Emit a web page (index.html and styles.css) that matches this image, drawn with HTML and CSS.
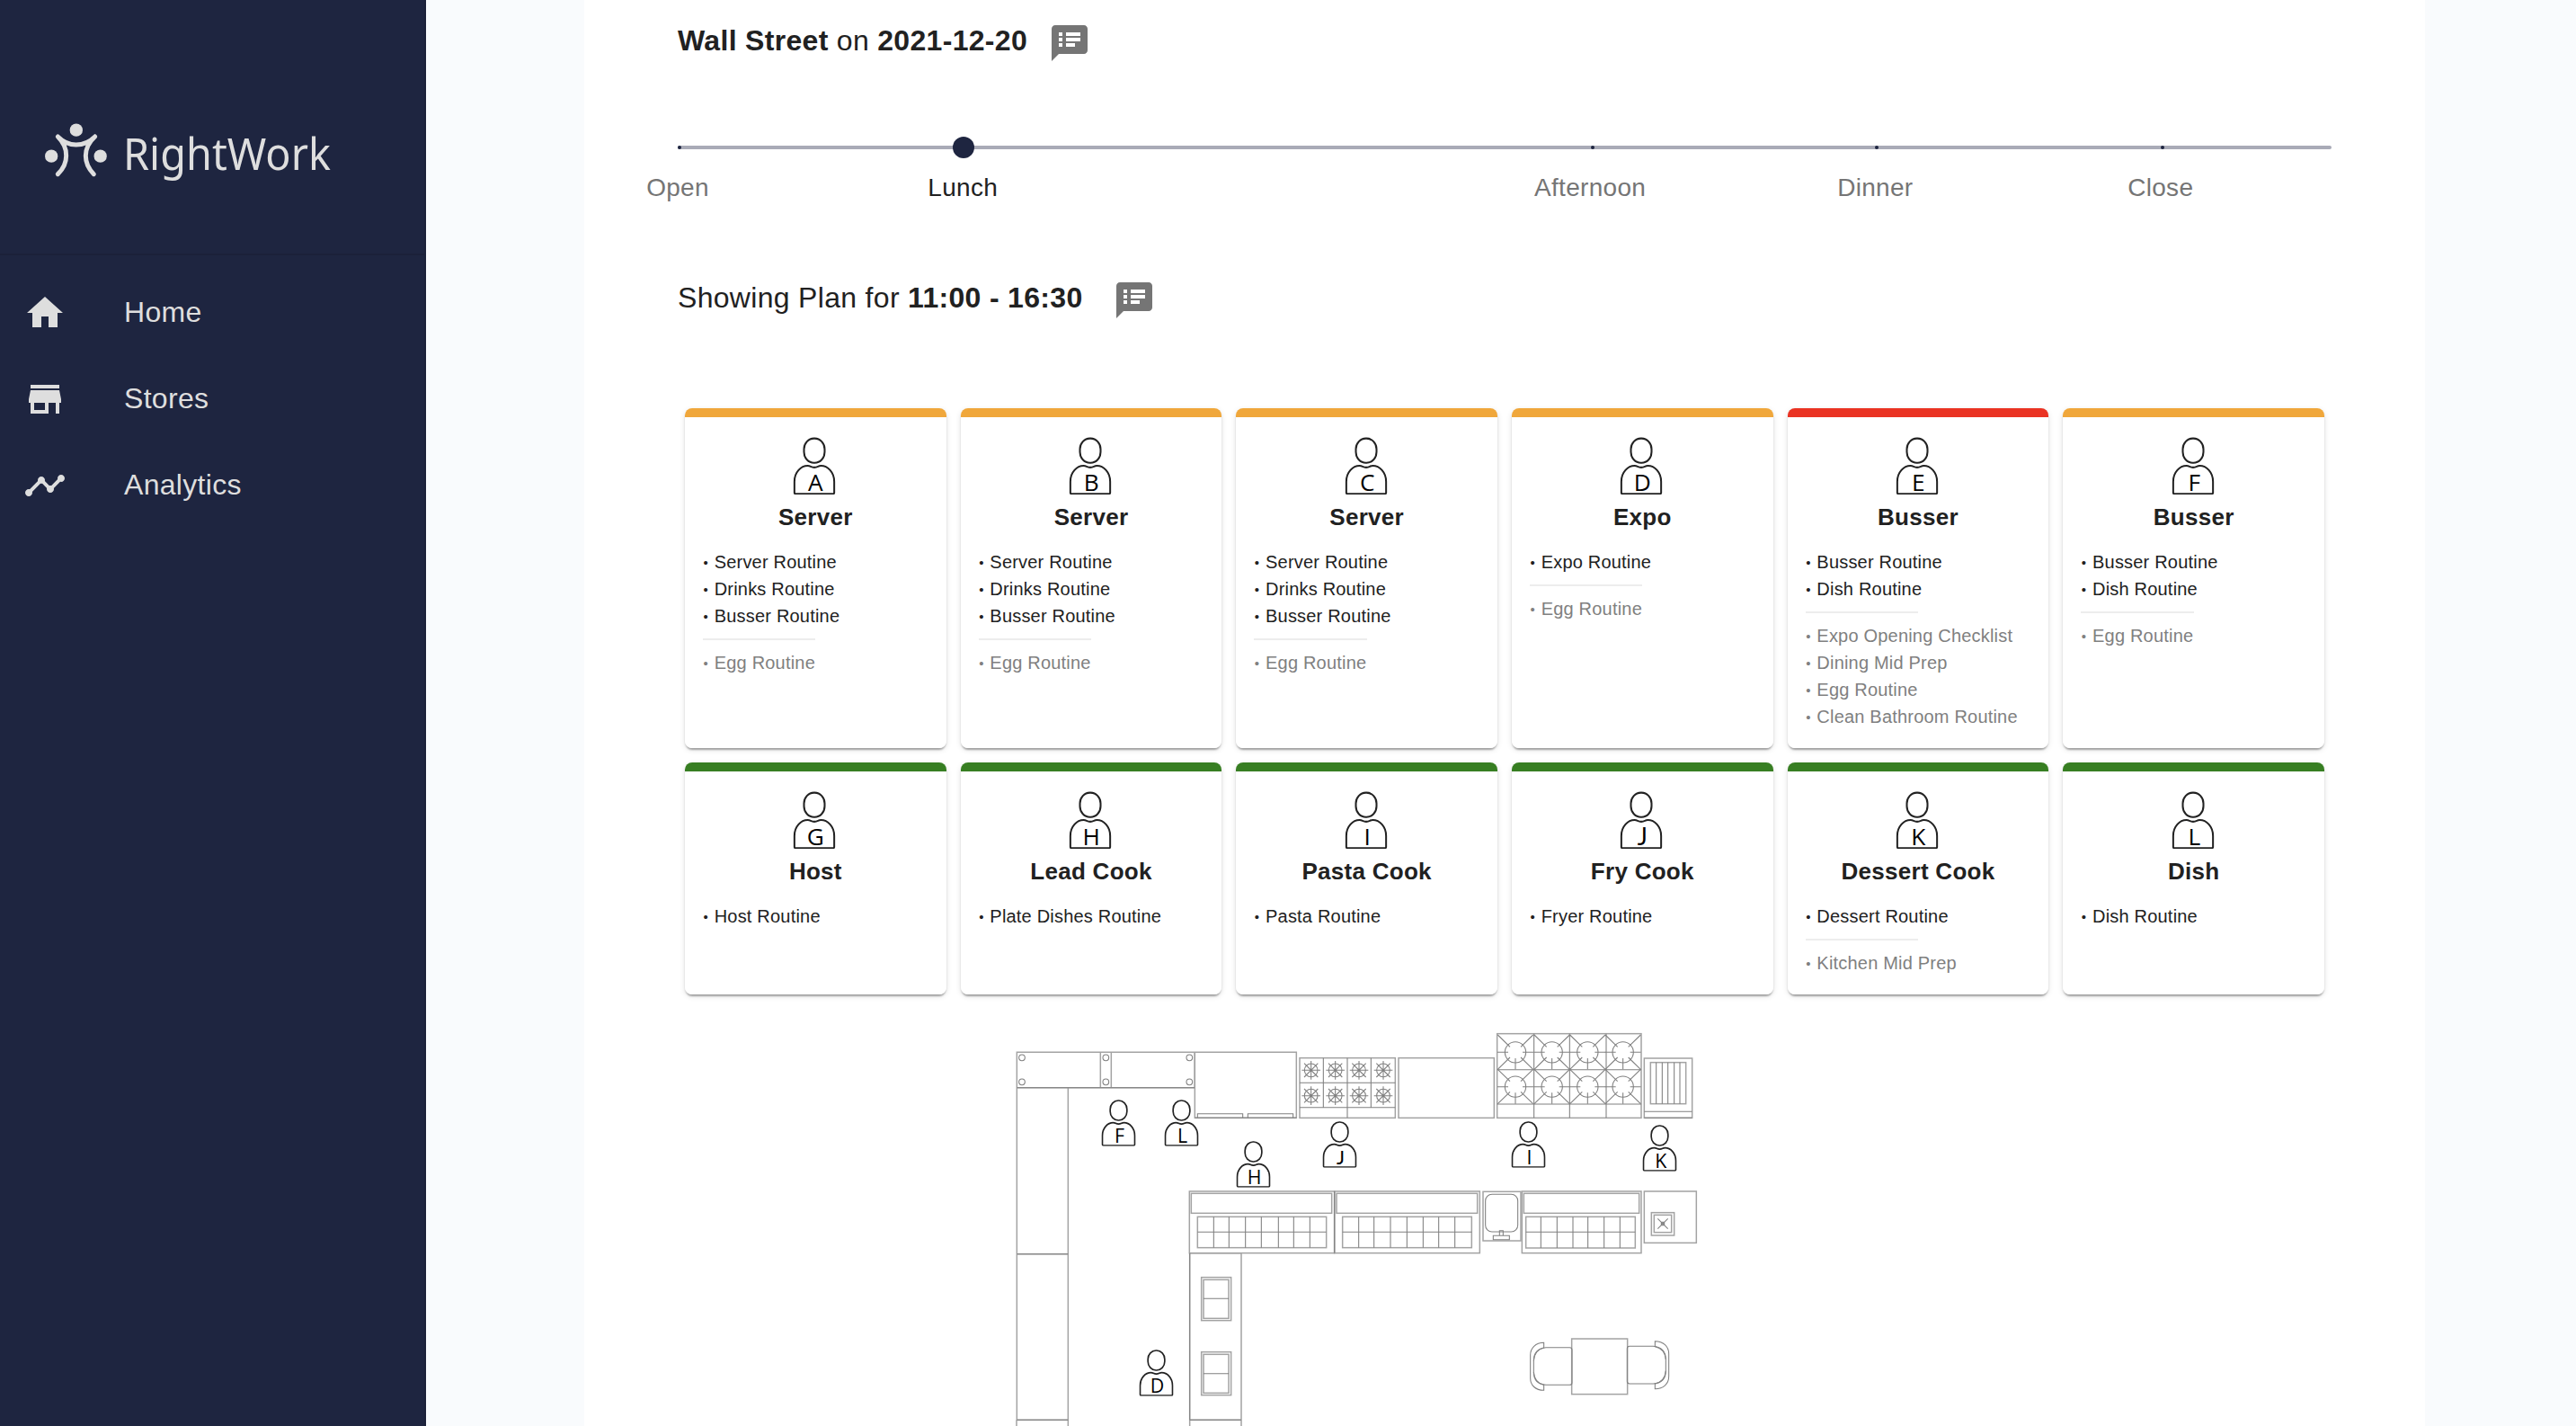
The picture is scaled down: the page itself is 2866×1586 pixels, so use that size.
FILE: index.html
```html
<!DOCTYPE html>
<html lang="en">
<head>
<meta charset="utf-8">
<title>RightWork</title>
<link rel="stylesheet" href="styles.css">
</head>
<body>
<svg class="defs" aria-hidden="true">
  <symbol id="person" viewBox="-58 -3 116 156">
    <rect x="-28" y="1" width="56" height="66" rx="27" ry="29"/>
    <path d="M-54 148V118C-54 92-36 75-18 75Q-14 75-10 77Q0 82 10 77Q14 75 18 75C36 75 54 92 54 118V148Q54 151 51 151H-51Q-54 151-54 148Z"/>
  </symbol>
  <symbol id="notes" viewBox="0 0 24 24"><path d="M20 2H4c-1.1 0-1.99.9-1.99 2L2 22l4-4h14c1.1 0 2-.9 2-2V4c0-1.1-.9-2-2-2zM8 14H6v-2h2v2zm0-3H6V9h2v2zm0-3H6V6h2v2zm7 6h-5v-2h5v2zm3-3h-8V9h8v2zm0-3h-8V6h8v2z"/></symbol>
  <g id="burner"><circle r="22"/><path d="M-31 0H31M0-31V31M-23-23L23 23M23-23L-23 23"/></g>
  <g id="ring"><circle r="35"/><path d="M-59-58L-18-18M59-58L18-18M-59 57L-18 17M59 57L18 17M-60 0H-24M24 0H60M0 20V57"/></g>
</svg>
<div class="app">
  <aside class="sidebar">
    <div class="brand">
      <svg class="logo" width="400" height="80" viewBox="0 90 1200 240">
        <g class="logo-dots"><circle cx="254.500" cy="134" r="21.500"/><circle cx="171.500" cy="221" r="21.500"/><circle cx="335" cy="221" r="21.500"/></g>
        <path class="logo-lines" d="M193 156C212 175 222 195 221 220C221 243 211 264 193 281M193 156Q220 183 254 183Q290 183 317 156M317 156C296 175 286 195 286 220C286 243 296 264 313 281"/>
        <text class="logo-text" x="411" y="267" textLength="693" lengthAdjust="spacingAndGlyphs">RightWork</text>
      </svg>
    </div>
    <nav class="nav">
      <a class="nav-item"><svg viewBox="0 0 24 24"><path d="M10 20v-6h4v6h5v-8h3L12 3 2 12h3v8z"/></svg><span>Home</span></a>
      <a class="nav-item"><svg viewBox="0 0 24 24"><path d="M20 4H4v2h16V4zm1 10v-2l-1-5H4l-1 5v2h1v6h10v-6h4v6h2v-6h1zm-9 4H6v-4h6v4z"/></svg><span>Stores</span></a>
      <a class="nav-item"><svg viewBox="0 0 24 24"><path d="M23 8c0 1.100-.9 2-2 2-.18 0-.35-.02-.51-.07l-3.560 3.550c.05.16.07.34.07.52 0 1.100-.9 2-2 2s-2-.9-2-2c0-.18.02-.36.07-.52l-2.550-2.550c-.16.05-.34.07-.52.07s-.36-.02-.52-.07l-4.550 4.560c.05.16.07.33.07.51 0 1.100-.9 2-2 2s-2-.9-2-2 .9-2 2-2c.18 0 .35.02.51.07l4.560-4.550C8.020 9.360 8 9.180 8 9c0-1.100.9-2 2-2s2 .9 2 2c0 .18-.02.36-.07.52l2.550 2.550c.16-.05.34-.07.52-.07s.36.02.52.07l3.550-3.560C19.020 8.350 19 8.180 19 8c0-1.100.9-2 2-2s2 .9 2 2z"/></svg><span>Analytics</span></a>
    </nav>
  </aside>
  <main class="main">
    <section class="panel">
      <h1 class="heading"><span><b>Wall Street</b> on <b>2021-12-20</b></span><svg class="note"><use href="#notes"/></svg></h1>
      <div class="slider">
        <div class="rail"></div>
        <i class="mark" style="left:0%"></i><i class="mark" style="left:55.220%"></i><i class="mark" style="left:72.390%"></i><i class="mark" style="left:89.670%"></i>
        <i class="thumb" style="left:17.280%"></i>
        <span class="label" style="left:0%">Open</span>
        <span class="label label-active" style="left:17.240%">Lunch</span>
        <span class="label" style="left:55.170%">Afternoon</span>
        <span class="label" style="left:72.410%">Dinner</span>
        <span class="label" style="left:89.660%">Close</span>
      </div>
      <h2 class="heading heading-plan"><span>Showing Plan for <b>11:00 - 16:30</b></span><svg class="note"><use href="#notes"/></svg></h2>

      <div class="cards">
        <article class="card orange"><svg class="avatar" viewBox="-58 -3 116 156"><use href="#person" x="-58" y="-3" width="116" height="156"/><text x="3" y="143">A</text></svg><h3>Server</h3>
          <ul><li>Server Routine</li><li>Drinks Routine</li><li>Busser Routine</li></ul><hr><ul class="extra"><li>Egg Routine</li></ul></article>
        <article class="card orange"><svg class="avatar" viewBox="-58 -3 116 156"><use href="#person" x="-58" y="-3" width="116" height="156"/><text x="3" y="143">B</text></svg><h3>Server</h3>
          <ul><li>Server Routine</li><li>Drinks Routine</li><li>Busser Routine</li></ul><hr><ul class="extra"><li>Egg Routine</li></ul></article>
        <article class="card orange"><svg class="avatar" viewBox="-58 -3 116 156"><use href="#person" x="-58" y="-3" width="116" height="156"/><text x="3" y="143">C</text></svg><h3>Server</h3>
          <ul><li>Server Routine</li><li>Drinks Routine</li><li>Busser Routine</li></ul><hr><ul class="extra"><li>Egg Routine</li></ul></article>
        <article class="card orange"><svg class="avatar" viewBox="-58 -3 116 156"><use href="#person" x="-58" y="-3" width="116" height="156"/><text x="3" y="143">D</text></svg><h3>Expo</h3>
          <ul><li>Expo Routine</li></ul><hr><ul class="extra"><li>Egg Routine</li></ul></article>
        <article class="card red"><svg class="avatar" viewBox="-58 -3 116 156"><use href="#person" x="-58" y="-3" width="116" height="156"/><text x="3" y="143">E</text></svg><h3>Busser</h3>
          <ul><li>Busser Routine</li><li>Dish Routine</li></ul><hr><ul class="extra"><li>Expo Opening Checklist</li><li>Dining Mid Prep</li><li>Egg Routine</li><li>Clean Bathroom Routine</li></ul></article>
        <article class="card orange"><svg class="avatar" viewBox="-58 -3 116 156"><use href="#person" x="-58" y="-3" width="116" height="156"/><text x="3" y="143">F</text></svg><h3>Busser</h3>
          <ul><li>Busser Routine</li><li>Dish Routine</li></ul><hr><ul class="extra"><li>Egg Routine</li></ul></article>
        <article class="card green"><svg class="avatar" viewBox="-58 -3 116 156"><use href="#person" x="-58" y="-3" width="116" height="156"/><text x="3" y="143">G</text></svg><h3>Host</h3>
          <ul><li>Host Routine</li></ul></article>
        <article class="card green"><svg class="avatar" viewBox="-58 -3 116 156"><use href="#person" x="-58" y="-3" width="116" height="156"/><text x="3" y="143">H</text></svg><h3>Lead Cook</h3>
          <ul><li>Plate Dishes Routine</li></ul></article>
        <article class="card green"><svg class="avatar" viewBox="-58 -3 116 156"><use href="#person" x="-58" y="-3" width="116" height="156"/><text x="3" y="143">I</text></svg><h3>Pasta Cook</h3>
          <ul><li>Pasta Routine</li></ul></article>
        <article class="card green"><svg class="avatar" viewBox="-58 -3 116 156"><use href="#person" x="-58" y="-3" width="116" height="156"/><text class="letter-j" x="3" y="143">J</text></svg><h3>Fry Cook</h3>
          <ul><li>Fryer Routine</li></ul></article>
        <article class="card green"><svg class="avatar" viewBox="-58 -3 116 156"><use href="#person" x="-58" y="-3" width="116" height="156"/><text x="3" y="143">K</text></svg><h3>Dessert Cook</h3>
          <ul><li>Dessert Routine</li></ul><hr><ul class="extra"><li>Kitchen Mid Prep</li></ul></article>
        <article class="card green"><svg class="avatar" viewBox="-58 -3 116 156"><use href="#person" x="-58" y="-3" width="116" height="156"/><text x="3" y="143">L</text></svg><h3>Dish</h3>
          <ul><li>Dish Routine</li></ul></article>
      </div>

      <svg class="floor" width="1840" height="460" viewBox="-1068 -42 5520 1380">
        <!-- outer outlines -->
        <g class="outline">
          <path d="M64 91H657V209H64ZM64 209H235V764H64ZM64 764H235V1318H64ZM63 1318V1400M235 1318V1400M658 91H997V310H658Z"/>
          <path d="M343 91V209M379 91V209"/>
          <rect x="1008" y="110" width="319" height="200"/>
          <rect x="640" y="555" width="484" height="206"/>
          <rect x="1124" y="555" width="485" height="206"/>
          <path d="M641 761H813V1318H641ZM641 1318V1400M813 1318V1400"/>
          <rect x="646" y="562" width="469" height="66"/>
          <rect x="1131" y="562" width="470" height="66"/>
          <rect x="667" y="640" width="430" height="103"/>
          <rect x="1151" y="640" width="431" height="103"/>
          <rect x="680" y="842" width="99" height="144"/><rect x="687" y="850" width="84" height="129"/>
          <rect x="680" y="1091" width="99" height="144"/><rect x="687" y="1099" width="84" height="129"/>
          <g transform="translate(1290 0)">
            <rect x="48" y="110" width="319" height="200"/>
            <rect x="377" y="29" width="481" height="281"/>
            <rect x="868" y="111" width="160" height="199"/>
            <rect x="889" y="125" width="118" height="138"/>
            <rect x="330" y="556" width="126" height="164"/>
            <rect x="460" y="555" width="398" height="206"/>
            <rect x="466" y="562" width="385" height="66"/>
            <rect x="473" y="640" width="365" height="104"/>
            <rect x="868" y="555" width="174" height="172"/>
            <rect x="892" y="626" width="76" height="76"/>
            <rect x="901" y="634" width="58" height="58"/>
          </g>
          <rect x="1916" y="1047" width="186" height="185"/>
        </g>
        <!-- inner details -->
        <g class="detail">
          <path d="M64 209H657M64 764H235M64 1318H235M641 761V1318M641 1318H813M1124 555V761"/>
          <circle cx="81" cy="109" r="10"/><circle cx="361" cy="109" r="10"/><circle cx="640" cy="109" r="10"/>
          <circle cx="81" cy="190" r="10"/><circle cx="361" cy="190" r="10"/><circle cx="640" cy="190" r="10"/>
          <path d="M667 310V296H818V310M835 310V296H986V310M658 310H997"/>
          <path d="M1087 110V275M1167 110V310M1246 110V275M1008 193H1327M1008 275H1327"/>
          <use href="#burner" x="1046" y="151"/><use href="#burner" x="1127" y="151"/><use href="#burner" x="1206" y="151"/><use href="#burner" x="1287" y="151"/>
          <use href="#burner" x="1046" y="236"/><use href="#burner" x="1127" y="236"/><use href="#burner" x="1206" y="236"/><use href="#burner" x="1287" y="236"/>
          <path d="M667 691H1097M721 640V743M772 640V743M827 640V743M880 640V743M937 640V743M988 640V743M1042 640V743"/>
          <path d="M1151 691H1582M1205 640V743M1256 640V743M1311 640V743M1366 640V743M1420 640V743M1472 640V743M1526 640V743"/>
          <path d="M687 913H771M687 1163H771"/>
          <g transform="translate(1290 0)">
            <path d="M500 29V310M619 29V310M741 29V310M377 149H858M377 264H858"/>
            <use href="#ring" x="438" y="91"/><use href="#ring" x="560" y="91"/><use href="#ring" x="679" y="91"/><use href="#ring" x="797" y="91"/>
            <use href="#ring" x="438" y="206"/><use href="#ring" x="560" y="206"/><use href="#ring" x="679" y="206"/><use href="#ring" x="797" y="206"/>
            <path d="M868 289H1028M868 310H1028M908 125V263M928 125V263M947 125V263M968 125V263M987 125V263"/>
            <rect x="338" y="565" width="108" height="125" rx="22"/>
            <path d="M385 703V686H397V703M364 703H418V716H364Z"/>
            <path d="M473 691H838M523 640V744M577 640V744M630 640V744M680 640V744M734 640V744M787 640V744"/>
            <path d="M913 646L947 680M947 646L913 680M925 658H935V668H925Z"/>
          </g>
          <g transform="translate(1590 480)">
            <path d="M327 604Q327 596 319 596H240Q199 600 199 640V678Q199 718 240 721H319Q327 721 327 713Z"/>
            <path d="M199 640Q202 604 233 597V580C205 580 188 598 188 622V698C188 722 205 739 233 739V721Q202 714 199 678"/>
            <path d="M511 600Q511 592 519 592H598Q640 596 640 636V674Q640 714 598 717H519Q511 717 511 709Z"/>
            <path d="M640 636Q637 600 604 593V575C632 575 650 593 650 617V692C650 717 632 734 604 734V717Q637 710 640 674"/>
          </g>
        </g>
        <!-- crew positions -->
        <g class="crew">
          <use href="#person" x="345.500" y="248" width="116" height="156"/><text x="406.500" y="394">F</text>
          <use href="#person" x="555.500" y="248" width="116" height="156"/><text x="616.500" y="394">L</text>
          <use href="#person" x="795.500" y="386" width="116" height="156"/><text x="856.500" y="532">H</text>
          <use href="#person" x="1083.500" y="320" width="116" height="156"/><text class="letter-j" x="1144.500" y="466">J</text>
          <use href="#person" x="471.500" y="1082" width="116" height="156"/><text x="532.500" y="1228">D</text>
          <use href="#person" x="1713.500" y="320" width="116" height="156"/><text x="1774.500" y="466">I</text>
          <use href="#person" x="2151.500" y="332" width="116" height="156"/><text x="2213" y="478">K</text>
        </g>
      </svg>
    </section>
  </main>
</div>
</body>
</html>
```

FILE: styles.css
```css
* { box-sizing: border-box; }

body {
  margin: 0;
  overflow: hidden;
  color: #212121;
  font-family: "Liberation Sans", Arial, sans-serif;
}

.defs { display: none; }

.app { display: flex; height: 1586px; }

/* Sidebar */
.sidebar {
  flex: none;
  width: 474px;
  background: #1e2540;
  border-right: 2px solid #1b2139;
  color: #dedede;
}

.brand {
  height: 284px;
  padding-top: 130px;
  border-bottom: 2px solid #1b2139;
}

.logo { display: block; }
.logo-dots { fill: #dedede; }
.logo-lines { fill: none; stroke: #dedede; stroke-width: 15; stroke-linecap: round; }
.logo-text { fill: #dedede; font: 148px "Noto Sans", sans-serif; }

.nav { padding-top: 16px; }

.nav-item {
  display: flex;
  align-items: center;
  height: 96px;
  padding-left: 26px;
  gap: 64px;
  font-size: 32px;
  letter-spacing: 0.3px;
}

.nav-item svg { width: 48px; height: 48px; fill: #dedede; }
.nav-item span { padding-bottom: 1px; }

/* Main area */
.main { flex: 1; padding: 0 168px 0 176px; background: #f9fbfd; }

.panel { height: 1586px; padding: 24px 104px 0; background: #fff; overflow: hidden; }

.heading {
  display: flex;
  align-items: flex-start;
  gap: 23px;
  height: 48px;
  margin: 0;
  font-size: 32px;
  font-weight: 400;
  line-height: 42px;
  letter-spacing: 0.31px;
}

.heading-plan { gap: 34px; }

.note { width: 48px; height: 48px; fill: #757575; }

/* Day-part slider */
.slider { position: relative; height: 148px; margin-top: 90px; }

.rail { height: 4px; border-radius: 2px; background: #a9abb7; }

.mark { position: absolute; top: 0; width: 4px; height: 4px; border-radius: 2px; background: #1e2540; }

.thumb {
  position: absolute;
  top: -10px;
  width: 24px;
  height: 24px;
  margin-left: -12px;
  border-radius: 50%;
  background: #1e2540;
}

.label {
  position: absolute;
  top: 27px;
  color: #757575;
  font-size: 28px;
  line-height: 40px;
  letter-spacing: 0.3px;
  transform: translateX(-50%);
}

.label-active { color: #212121; }

/* Position cards */
.cards { display: grid; grid-template-columns: repeat(6, 1fr); gap: 16px; margin: 96px 8px 0; }

.card {
  --status: #f0a73b;
  padding: 32px 20px 20px;
  border-radius: 8px;
  background: linear-gradient(var(--status) 10px, #fff 10px);
  box-shadow: 0 4px 2px -2px rgba(0, 0, 0, .2), 0 2px 2px 0 rgba(0, 0, 0, .14), 0 2px 6px 0 rgba(0, 0, 0, .12);
}

.card.red { --status: #ea3323; }
.card.green { --status: #377e22; }

.avatar { display: block; width: 48px; height: 64px; margin: 0 0 0 calc(50% - 25px); overflow: visible; }

.avatar use, .crew use { fill: #fff; stroke: #222; stroke-width: 5; }
.avatar text, .crew text { fill: #000; font: 64px "Open Sans", sans-serif; text-anchor: middle; }
.avatar .letter-j, .crew .letter-j { font-family: Lato, sans-serif; }

.card h3 {
  margin: 7px 0 17px;
  font-size: 26px;
  line-height: 36px;
  letter-spacing: 0.28px;
  text-align: center;
  white-space: nowrap;
}

.card ul {
  margin: 0;
  padding: 0;
  list-style: none;
  font-size: 20px;
  line-height: 30px;
  letter-spacing: 0.2px;
  white-space: nowrap;
}

.card li::before {
  content: "•";
  display: inline-block;
  width: 12.200px;
  padding-left: 0.500px;
  font-size: 15px;
  line-height: 0;
  vertical-align: 1.500px;
}

.card .extra { color: #808080; }

.card hr { width: 50%; height: 2px; margin: 10px 0; border: 0; background: #ededed; }

/* Floor plan */
.floor { display: block; margin-top: 20px; }
.outline { fill: none; stroke: #a3a3a3; stroke-width: 4.500; }
.detail { fill: none; stroke: #808080; stroke-width: 3.200; }
```
